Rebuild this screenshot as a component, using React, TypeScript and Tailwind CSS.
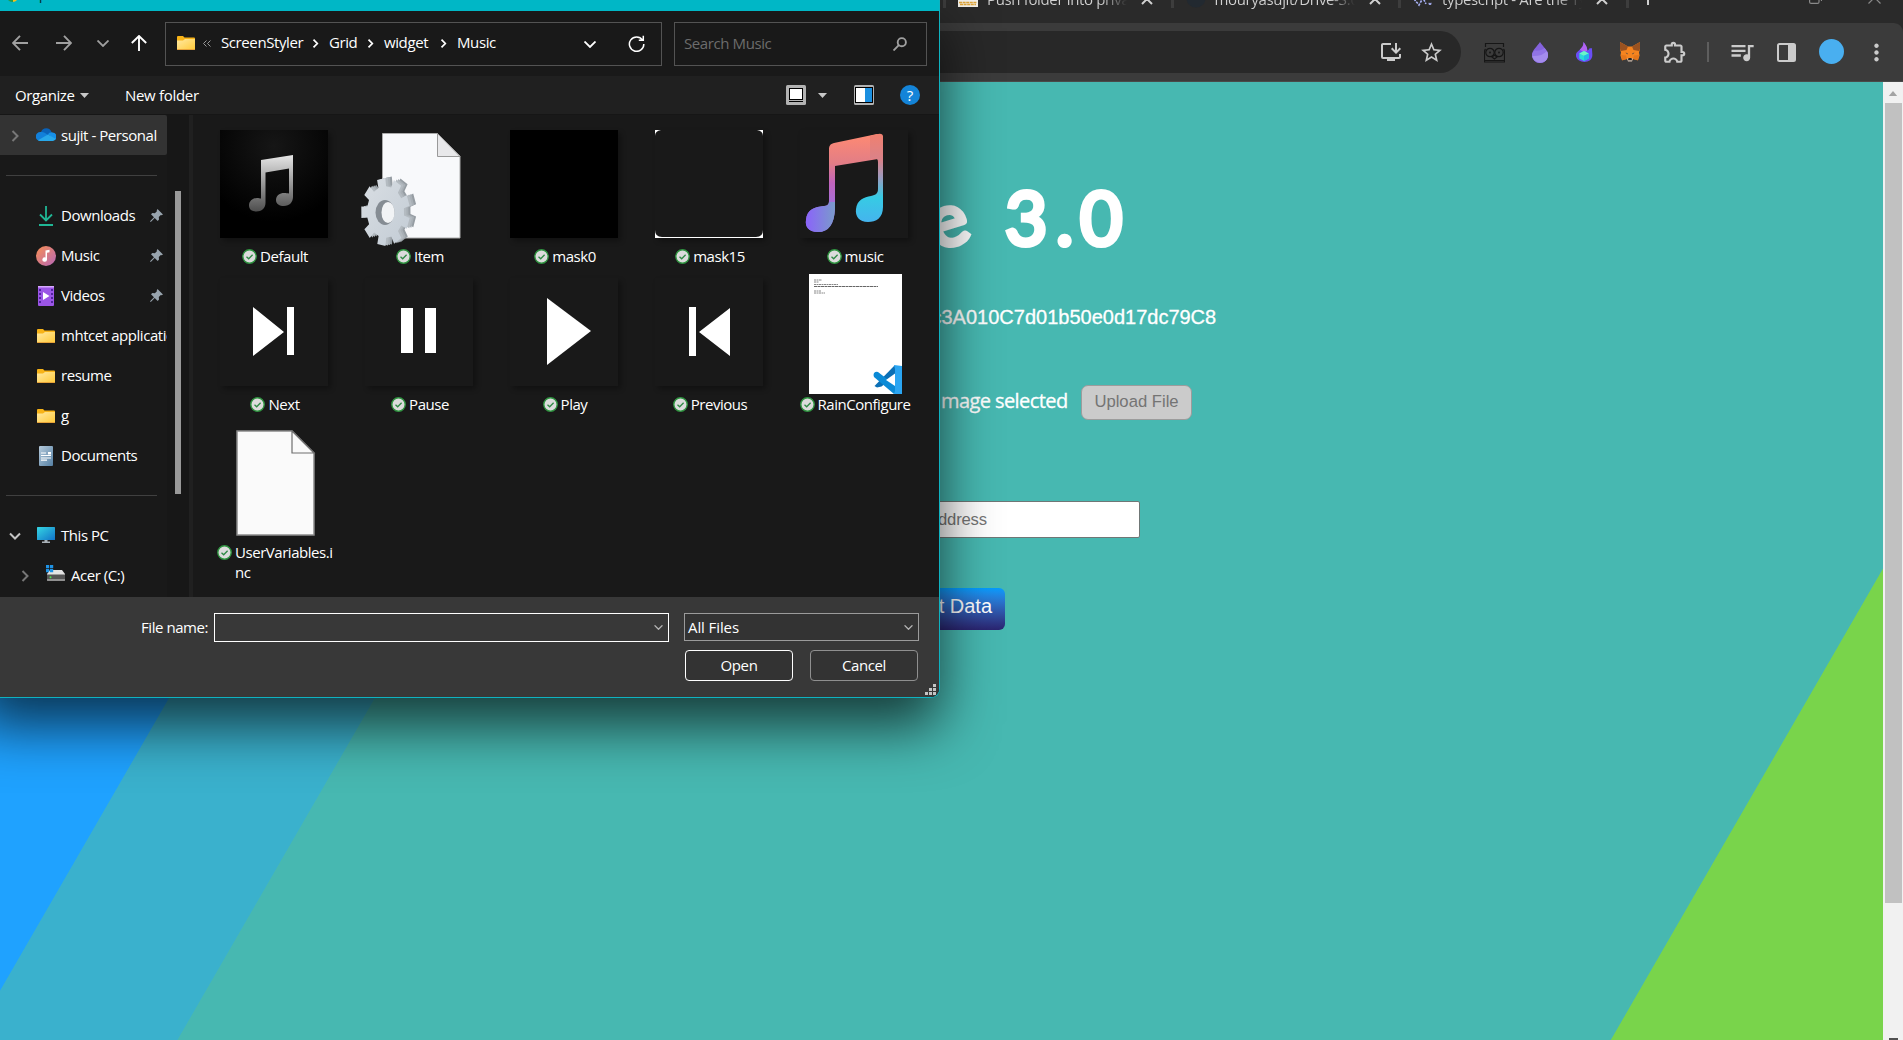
import type { ReactNode } from "react";
import {
  MdInstallDesktop,
  MdStarBorder,
  MdOutlineExtension,
  MdQueueMusic,
  MdMoreVert,
} from "react-icons/md";

const UI = "font-['Open_Sans','Noto_Sans',sans-serif]";
const ARIAL = "font-['Liberation_Sans',Arial,sans-serif]";

/* ---------- browser chrome ---------- */

function CloseMark() {
  return (
    <svg viewBox="0 0 12 12" className="size-3 shrink-0" fill="none" stroke="#d0d0d0" strokeWidth="2">
      <path d="M1 1l10 10M11 1L1 11" />
    </svg>
  );
}

function Tab({ icon, title }: { icon: ReactNode; title: string }) {
  return (
    <div className="flex h-[27px] w-[227.5px] shrink-0 items-center border-l-[3px] border-[#3d3d3d] pl-[12px]">
      <span className="flex size-5 shrink-0 items-center justify-center">{icon}</span>
      <span className="ml-[9px] w-[140px] translate-y-[5px] overflow-hidden bg-linear-to-r from-[#d2d2d2] from-82% to-transparent bg-clip-text text-[15px] tracking-[-0.35px] whitespace-nowrap text-transparent">
        {title}
      </span>
      <span className="ml-[14px] flex translate-y-[4px]">
        <CloseMark />
      </span>
    </div>
  );
}

function TabStrip() {
  return (
    <div className="h-[23px] overflow-hidden bg-[#2a2a2a] pl-[943px]">
      <div className="-mt-[19px] flex h-[27px] items-center">
        <Tab
          title="Push folder into private"
          icon={
            <svg viewBox="0 0 20 20" className="size-5 translate-y-[2px]">
              <rect width="20" height="20" fill="#f4f1ea" />
              <path d="M1 15.500h18M2 17.500h16" stroke="#e0a63a" strokeWidth="1.4" strokeDasharray="3 .6" />
            </svg>
          }
        />
        <Tab
          title="mouryasujit/Drive-3.0"
          icon={
            <svg viewBox="0 0 20 20" className="size-5 translate-y-[3px]">
              <circle cx="10" cy="10" r="9.500" fill="#222930" />
            </svg>
          }
        />
        <Tab
          title="typescript - Are the Types"
          icon={
            <svg viewBox="0 0 20 20" className="size-5 translate-y-[2px]" fill="none" stroke="#a9b2f5" strokeWidth="1.600" strokeDasharray="2.500 1">
              <path d="M1 12l5 6 4-7 3 6" />
              <circle cx="17" cy="16.500" r=".7" />
            </svg>
          }
        />
        <div className="flex h-[27px] w-[257px] shrink-0 items-center justify-between border-l-[3px] border-[#3d3d3d] pl-[12px]">
          <svg viewBox="0 0 14 14" className="size-[14px] translate-y-[3px]" fill="none" stroke="#d0d0d0" strokeWidth="2">
            <path d="M7 0v14M0 7h14" />
          </svg>
          <div className="flex translate-y-[3px] gap-[46px] pr-[2px]">
            <svg viewBox="0 0 13 13" className="size-[13px]" fill="none" stroke="#8a8a8a" strokeWidth="1.200">
              <rect x=".6" y="3" width="9.400" height="9.400" rx="1.500" />
              <path d="M3 .6h7.500a2 2 0 0 1 2 2V10" />
            </svg>
            <svg viewBox="0 0 13 13" className="size-[13px]" fill="none" stroke="#8a8a8a" strokeWidth="1.200">
              <path d="M.5.5l12 12M12.500.5l-12 12" />
            </svg>
          </div>
        </div>
      </div>
    </div>
  );
}

function Toolbar() {
  return (
    <div className="bg-[#2a2a2a]">
      <div className="flex h-[59px] items-center rounded-tr-[9px] border-b border-[#4a4a4a] bg-[#3b3b3b] text-[#cbcbcb]">
        <div className="flex h-[42px] w-[1461px] items-center rounded-r-full bg-[#282828] pl-[1379px]">
          <MdInstallDesktop className="size-6" />
          <MdStarBorder className="ml-[15.5px] size-[25px]" />
        </div>
        <svg viewBox="0 0 21 21" className="ml-[23px] size-[21px]" fill="none" stroke="#161616" strokeWidth="1.2">
          <path d="M1 1.500h19M1.500 1v4M19.500 1v4M1.500 7q-1 1-1 3v10h20V10q0-2-1-3M1 18.500h19" />
          <circle cx="6" cy="10.500" r="4.200" />
          <circle cx="15" cy="10.500" r="4.200" />
          <circle cx="6" cy="10.500" r=".4" />
          <circle cx="15" cy="10.500" r=".4" />
          <path d="M8 15l2.500 2 2.500-2-2.500-2z" />
        </svg>
        <svg viewBox="0 0 16 21" className="ml-[27px] h-[21px] w-4">
          <path d="M8 0c3 4.500 8 8.500 8 13a8 8 0 0 1-16 0C0 8.500 5 4.500 8 0z" fill="#8462dc" />
          <path d="M2.500 8.500c4 .5 8-.5 10-2.500 2 2.500 3.500 4.500 3.500 7a8 8 0 0 1-16 0c0-1.600 1-3 2.500-4.500z" fill="#9174e4" />
          <path d="M.3 14c6 .3 11-1 14.700-5 1.500 3 1.500 6-.6 9C11 22 2 21.500.3 14z" fill="#a48cec" />
        </svg>
        <svg viewBox="0 0 18 21" className="ml-[28px] h-[20px] w-[17px]">
          <path d="M8 0c2 3 4 5 4 9 1.200-.5 2-1.500 2.300-2.500H17c-.3 3 .6 5 .2 8.500-.7 4-4 6-8.200 6s-8-2-9-6c-.7-4 2-5 4-7C6.500 6 8 4 8 0z" fill="#6a4df6" />
          <path d="M8 0c2 3 4 5 4 9L9 11 4 8C6.500 6 8 4 8 0z" fill="#b263f0" />
          <path d="M8.500 9.500l5 2.500v5.500l-5 2.500-5-2.500V12z" fill="#2bd9d9" />
          <path d="M8.500 9.500l5 2.500-5 2.500-5-2.500z" fill="#6af5c8" />
          <path d="M8.500 14.500l5-2.500v5.500l-5 2.500z" fill="#22b8e8" />
        </svg>
        <svg viewBox="0 0 22 20" className="ml-[26px] h-5 w-[22px]">
          <path d="M1 0l8 4.500h4L21 0v7l-1 3.500.6 3-1.600 4.500-5-1-1.500 1.500h-3L8 17l-5 1-1.600-4.500.6-3L1 7z" fill="#f5841f" />
          <path d="M1 0l8 4.500L7.500 8 2 9 1 7zM21 0l-8 4.500L14.500 8l5.500 1 1-2z" fill="#9a5220" />
          <path d="M2 13l5 .5L8 17l-5 1.500zM20 13l-5 .5-1 3.500 5 1.500z" fill="#e4761b" />
          <path d="M8 16.500h6l-1 3H9z" fill="#d8c4b4" />
          <path d="M9.500 16h3l.5 2.200H9z" fill="#222" />
          <path d="M6.500 10.500l2 .8v1.200zM15.500 10.500l-2 .8v1.200z" fill="#2c3b4b" />
        </svg>
        <MdOutlineExtension className="ml-[21px] size-[26px]" />
        <div className="ml-[19px] h-5 w-[2px] bg-[#5e5e5e]" />
        <MdQueueMusic className="ml-[19px] size-[28px]" />
        <svg viewBox="0 0 19 19" className="ml-[21px] size-[19px]" fill="none">
          <rect x="1" y="1" width="17" height="17" rx="1.500" stroke="#cbcbcb" strokeWidth="2" />
          <path d="M11 1h7v17h-7z" fill="#cbcbcb" />
        </svg>
        <div className="-mt-px ml-[23px] size-[25px] rounded-full bg-[#49aff0]" />
        <MdMoreVert className="ml-[19px] size-[27px]" />
      </div>
    </div>
  );
}

/* ---------- web page ---------- */

function Page() {
  return (
    <div className="flex h-[958px]">
      <main className="w-[1883px] overflow-hidden bg-[linear-gradient(120deg,#1fa2ff_454px,#3ab1cd_454.8px,#3ab1cd_632.3px,#47b8b1_633px,#47b8b1_1873.6px,#79d44b_1874.4px)] pl-[941px] text-white">
        <h1 className="mt-[90px] flex h-[90px] items-center font-['Lato',sans-serif] text-[73px] leading-[90px] font-normal whitespace-pre [-webkit-text-stroke:5px_white] [stroke-linejoin:round]">
          <span className="-ml-[14px] inline-block w-[45px] -rotate-[17deg]">e</span>
          <span className="ml-[33px] w-[51px]">3</span>
          <span className="w-[24px]">.</span>
          <span className="w-[50px]">0</span>
        </h1>
        <p className={`mt-[41px] -ml-[9.5px] h-[28px] text-[20px] leading-[28px] ${ARIAL} [-webkit-text-stroke:0.3px_white]`}>
          c3A010C7d01b50e0d17dc79C8
        </p>
        <div className="mt-[54px] flex h-[35px]">
          <span className={`w-[140px] text-[20px] leading-[31px] font-medium tracking-[-0.58px] whitespace-nowrap ${UI} [-webkit-text-stroke:0.3px_white]`}>mage selected</span>
          <button className={`h-[35px] w-[111px] rounded-[7px] border border-[#9c9c9c] bg-[#cbcbcb] pb-[3px] text-[16.67px] text-[#747474] ${ARIAL}`}>
            Upload File
          </button>
        </div>
        <div className={`mt-[81px] -ml-[10px] flex h-[37px] w-[209px] items-center rounded-r-[2px] border border-[#6f7776] bg-white pl-[6px] text-[16.67px] tracking-[-0.2px] text-[#757575] ${ARIAL}`}>
          ddress
        </div>
        <button className={`mt-[50px] -ml-[10px] flex h-[42px] w-[74px] justify-end rounded-[6px] bg-linear-to-b from-[#009dff] to-[#2a2470] pt-[3px] pr-[13px] text-[20px] whitespace-nowrap ${ARIAL}`}>
          t Data
        </button>
      </main>
      <div className="flex w-5 flex-col items-center bg-[#f1f1f1]">
        <svg viewBox="0 0 10 6" className="mt-[9px] h-[5px] w-[10px]">
          <path d="M0 6l5-6 5 6z" fill="#a3a3a3" />
        </svg>
        <div className="mt-[7px] h-[800px] w-[17px] bg-[#c1c1c1]" />
        <div className="mt-[135px] h-[2px] w-[9px] bg-[#505050]" />
      </div>
    </div>
  );
}

/* ---------- dialog icons ---------- */

function Folder() {
  return (
    <svg viewBox="0 0 18 14" className="h-[14px] w-[18px] shrink-0">
      <defs>
        <linearGradient id="fold" x1="0" y1="0" x2="1" y2="1">
          <stop offset="0" stopColor="#ffe9a2" />
          <stop offset="1" stopColor="#ffc937" />
        </linearGradient>
      </defs>
      <path d="M0 1a1 1 0 0 1 1-1h5l1.500 1.500H17a1 1 0 0 1 1 1V13H0z" fill="#f7b318" />
      <path d="M0 4.500h6L8 3h10v10a1 1 0 0 1-1 1H1a1 1 0 0 1-1-1z" fill="url(#fold)" />
      <path d="M0 13h18a1 1 0 0 1-1 1H1a1 1 0 0 1-1-1z" fill="#e8a33a" />
    </svg>
  );
}

function Pin() {
  return (
    <svg viewBox="0 0 13 13" className="size-[13px] shrink-0">
      <path d="M7.500 0L13 5.500l-1.500.8-.7-.2-2 2 .2 2.500-1.300 1.400-3-3L.8 13 0 12.200 4 8.300l-3-3L2.400 4l2.500.2 2-2-.2-.7z" fill="#98a4ae" />
    </svg>
  );
}

function Chevron({ open = false }: { open?: boolean }) {
  return (
    <svg viewBox="0 0 12 12" className="size-3 shrink-0" fill="none" stroke={open ? "#c4c4c4" : "#777"} strokeWidth="2">
      <path d={open ? "M1 3.500l5 5 5-5" : "M3.500 1l5 5-5 5"} />
    </svg>
  );
}

function ThinChevron({ className, color = "#fff" }: { className: string; color?: string }) {
  return (
    <svg viewBox="0 0 12 7" className={className} fill="none" stroke={color} strokeWidth="1.8">
      <path d="M.5.5L6 6 11.500.5" />
    </svg>
  );
}

function NavArrow({ d, color }: { d: string; color: string }) {
  return (
    <svg viewBox="0 0 16 16" className="size-4 shrink-0" fill="none" stroke={color} strokeWidth="1.9">
      <path d={d} />
    </svg>
  );
}

function SyncedBadge() {
  return (
    <svg viewBox="0 0 15 15" className="mt-[3px] size-[15px] shrink-0">
      <circle cx="7.500" cy="7.500" r="6.700" fill="#dcdcdc" stroke="#2f9440" strokeWidth="1.400" />
      <path d="M4.500 7.700l2.200 2.100 3.900-4" fill="none" stroke="#2f8a45" strokeWidth="1.300" />
    </svg>
  );
}

const sideIcons: Record<string, ReactNode> = {
  cloud: (
    <svg viewBox="0 0 20 13" className="-mt-[2px] h-[13px] w-5">
      <path d="M5 4a5.500 5.500 0 0 1 10.500 0L10 9 2 7z" fill="#0a62b8" />
      <path d="M4.500 4C7 3.500 9 4.500 12 7l-8 6A4.500 4.500 0 0 1 4.500 4z" fill="#1280da" />
      <path d="M12 6.500c1-2 3-2.500 4.500-2A4.200 4.200 0 0 1 19 12z" fill="#1790e8" />
      <path d="M2 12.200L12 6.500l7.500 4.200A3 3 0 0 1 17 13H4a4 4 0 0 1-2-.8z" fill="#28a8ea" />
    </svg>
  ),
  download: (
    <svg viewBox="0 0 14 20" className="h-5 w-[14px]" fill="none" stroke="#20b795" strokeWidth="1.800">
      <path d="M7 0v14M1 8.500l6 6 6-6M0 19h14" />
    </svg>
  ),
  music: (
    <svg viewBox="0 0 20 20" className="size-5">
      <defs>
        <linearGradient id="mus" x1="0" y1="0" x2="1" y2="1">
          <stop offset="0" stopColor="#f98f52" />
          <stop offset="1" stopColor="#b567b8" />
        </linearGradient>
      </defs>
      <circle cx="10" cy="10" r="10" fill="url(#mus)" />
      <path d="M9.500 4.500l4-.8v2.600l-2.500.5v6.700a2.300 2.300 0 1 1-1.500-2.100z" fill="#fff" />
    </svg>
  ),
  video: (
    <svg viewBox="0 0 16 20" className="h-5 w-4">
      <rect width="16" height="20" rx="1" fill="#9b55e6" />
      <rect width="16" height="1.500" fill="#d7a8ff" />
      <path d="M5 6v8l6.500-4z" fill="#fff" />
      <path d="M2 3v16M14 3v16" stroke="#4b1f96" strokeWidth="1.800" strokeDasharray="2 2" />
    </svg>
  ),
  folder: <Folder />,
  docs: (
    <svg viewBox="0 0 14 20" className="h-5 w-[14px]">
      <defs>
        <linearGradient id="doc" x1="0" y1="0" x2="1" y2="1">
          <stop offset="0" stopColor="#b5cadb" />
          <stop offset="1" stopColor="#5580a4" />
        </linearGradient>
      </defs>
      <rect width="14" height="20" rx="1" fill="url(#doc)" />
      <path d="M2 7h5M2 9.500h10M2 12h10M2 14.200h6" stroke="#fff" strokeWidth="1.200" />
      <path d="M9 6h3v2.500H9z" fill="#fff" />
    </svg>
  ),
  pc: (
    <svg viewBox="0 0 18 16" className="-mt-px h-4 w-[18px]">
      <defs>
        <linearGradient id="pc" x1="0" y1="0" x2="1" y2="1">
          <stop offset="0" stopColor="#35d6e3" />
          <stop offset="1" stopColor="#1173c8" />
        </linearGradient>
      </defs>
      <rect width="18" height="13" rx=".6" fill="url(#pc)" />
      <path d="M7.500 13h3v1.500H13V16H5v-1.500h2.500z" fill="#a9b1b8" />
    </svg>
  ),
  drive: (
    <svg viewBox="0 0 19 16" className="-mt-[5px] h-4 w-[19px]">
      <path d="M4 5h12l3 4v1H1V9z" fill="#e4e4e4" />
      <path d="M1 9.500h18V15a1 1 0 0 1-1 1H2a1 1 0 0 1-1-1z" fill="#555" />
      <path d="M1 14.500h18v1H1z" fill="#ccc" />
      <circle cx="4.500" cy="12.300" r="1" fill="#4de34d" />
      <path d="M0 0h3.200v3.200H0zM4 0h3.200v3.200H4zM0 4h3.200v3.200H0zM4 4h3.200v3.200H4z" fill="#1e93e6" />
    </svg>
  ),
};

/* ---------- dialog parts ---------- */

type SideRow = { label: string; icon: string; pin?: boolean; chevron?: "open" | "closed"; selected?: boolean; nested?: boolean } | null;

const sideRows: SideRow[] = [
  { label: "sujit - Personal", icon: "cloud", chevron: "closed", selected: true },
  null,
  { label: "Downloads", icon: "download", pin: true },
  { label: "Music", icon: "music", pin: true },
  { label: "Videos", icon: "video", pin: true },
  { label: "mhtcet application", icon: "folder" },
  { label: "resume", icon: "folder" },
  { label: "g", icon: "folder" },
  { label: "Documents", icon: "docs" },
  null,
  { label: "This PC", icon: "pc", chevron: "open" },
  { label: "Acer (C:)", icon: "drive", chevron: "closed", nested: true },
];

function Sidebar() {
  return (
    <div className="flex h-[482px] w-[193px] shrink-0 overflow-hidden">
      <div className="w-[167px] shrink-0">
        {sideRows.map((row, i) =>
          row === null ? (
            <div key={i} className="flex h-10 items-center pl-[6px]">
              <div className="h-px w-[151px] bg-[#404040]" />
            </div>
          ) : (
            <div
              key={i}
              className={`flex h-10 items-center overflow-hidden pt-px ${row.nested ? "pl-[19px]" : "pl-[9px]"} ${row.selected ? "rounded-r-[2px] bg-[#333]" : ""}`}
            >
              <span className="w-3 shrink-0">{row.chevron && <Chevron open={row.chevron === "open"} />}</span>
              <span className={`flex w-5 shrink-0 justify-center ${row.nested ? "ml-[14px]" : "ml-[15px]"}`}>{sideIcons[row.icon]}</span>
              <span className={`${row.nested ? "ml-[6px]" : "ml-[5px]"} w-[89px] shrink-0 text-[15px] tracking-[-0.45px] whitespace-nowrap`}>
                {row.label}
              </span>
              {row.pin && <Pin />}
            </div>
          ),
        )}
      </div>
      <div className="w-[22px] shrink-0 bg-[#171717] pt-[76px] pl-[8px]">
        <div className="h-[303px] w-[6px] bg-[#999]" />
      </div>
      <div className="h-full w-1 border-r-2 border-l-2 border-[#202020] bg-[#262626]" />
    </div>
  );
}

function Thumb({ children }: { children?: ReactNode }) {
  return (
    <div className="size-[108px] shadow-[3px_3px_5px_rgba(0,0,0,0.3)]">
      <svg viewBox="0 0 108 108" className="size-[108px]">
        {children}
      </svg>
    </div>
  );
}

/* Outline of a cog seen slightly from the side: nine flat-topped teeth round an ellipse. */
function cog(cx: number, cy: number, rx: number, ry: number) {
  const teeth = 9;
  const inner = 0.76;
  const pts: string[] = [];
  for (let i = 0; i < teeth; i++) {
    const base = (i / teeth) * Math.PI * 2 - 1.75;
    const steps: [number, number][] = [
      [-0.21, inner],
      [-0.17, 1],
      [0.17, 1],
      [0.21, inner],
    ];
    for (const [da, r] of steps) {
      pts.push(`${(cx + Math.cos(base + da) * rx * r).toFixed(1)},${(cy + Math.sin(base + da) * ry * r).toFixed(1)}`);
    }
  }
  return pts.join(" ");
}

type FileItem = { name: string; art: ReactNode };

const files: FileItem[] = [
  {
    name: "Default",
    art: (
      <Thumb>
        <defs>
          <radialGradient id="dk" cx=".5" cy=".15" r=".7">
            <stop offset="0" stopColor="#161616" />
            <stop offset="1" stopColor="#000" />
          </radialGradient>
          <linearGradient id="nt" x1="0" y1="25" x2="0" y2="82" gradientUnits="userSpaceOnUse">
            <stop offset="0" stopColor="#e6e6e6" />
            <stop offset="1" stopColor="#4c4c4c" />
          </linearGradient>
        </defs>
        <rect width="108" height="108" fill="url(#dk)" />
        <path d="M41 30l32-5v42c0 5-3.500 9-9 9-4.500 0-8-2-8-6 0-4.500 4-7 8-7 2 0 3.500.3 5 .5V38.500l-23.500 4V73c0 5-4 8.500-9 8.500-4.500 0-7.500-2-7.500-6 0-4.500 4-7.500 8-7.500 1.500 0 3 .3 4 .6z" fill="url(#nt)" />
      </Thumb>
    ),
  },
  {
    name: "Item",
    art: (
      <svg viewBox="0 0 120 120" className="size-[120px] overflow-visible">
        <defs>
          <linearGradient id="gear" x1="0" y1="0" x2="1" y2="1">
            <stop offset="0" stopColor="#d9dee3" />
            <stop offset="1" stopColor="#c3ccd5" />
          </linearGradient>
        </defs>
        <path d="M23.500 7.500h55l22.500 22.500v82H23.500z" fill="#f8f9fb" stroke="#aaa" />
        <path d="M78.500 7.500L101 30.500H78.500z" fill="#e8e8ea" stroke="#999" />
        <polygon points={cog(33, 84.5, 24.5, 34)} fill="#969da3" />
        <polygon points={cog(31, 85, 24.5, 34)} fill="#a9b0b6" />
        <polygon points={cog(29, 85.5, 24.5, 34)} fill="#b4bbc1" />
        <polygon points={cog(26.5, 86, 24.5, 34)} fill="url(#gear)" />
        <ellipse cx="26" cy="86.500" rx="9.500" ry="12.500" fill="#858c93" />
        <ellipse cx="29" cy="86.500" rx="6.500" ry="10.500" fill="#f1f3f5" />
      </svg>
    ),
  },
  { name: "mask0", art: <Thumb><rect width="108" height="108" fill="#000" /></Thumb> },
  {
    name: "mask15",
    art: (
      <Thumb>
        <path fillRule="evenodd" d="M0 0h108v108H0zM6 0q-6 1-6 6v94q0 7 7 7h94q7 0 7-7V6q0-5-6-6z" fill="#fff" />
      </Thumb>
    ),
  },
  {
    name: "music",
    art: (
      <Thumb>
        <defs>
          <linearGradient id="mA" x1="0" y1="0" x2="0" y2="1">
            <stop offset="0" stopColor="#ff8a72" />
            <stop offset=".3" stopColor="#e27d86" />
            <stop offset=".5" stopColor="#c164bd" />
            <stop offset=".75" stopColor="#a072dd" />
            <stop offset="1" stopColor="#8a6cf0" />
          </linearGradient>
          <linearGradient id="mB" x1="0" y1="0" x2="0" y2="1">
            <stop offset="0" stopColor="#f0806f" />
            <stop offset=".3" stopColor="#d9828a" />
            <stop offset=".5" stopColor="#9a9cc0" />
            <stop offset=".72" stopColor="#36cbe4" />
            <stop offset="1" stopColor="#45b4ee" />
          </linearGradient>
          <linearGradient id="mC" x1="0" y1="0" x2="1" y2="0">
            <stop offset="0" stopColor="#8b63fa" />
            <stop offset="1" stopColor="#7a9bcb" />
          </linearGradient>
        </defs>
        <path d="M29 20c0-4 1-6 5-7l43-9 6 2-5 23-43 7v43q-1 23-17 23C8 102 5 96 6 90c1-11 9-13 18-14 4-.5 5-2 5-6z" fill="url(#mA)" />
        <path d="M35 78q-1 24-17 24C8 102 5 96 6 90c1-11 9-13 18-14 3 0 5-1 5-4h6z" fill="url(#mC)" />
        <path d="M70 6l8-2q5-1 5 3v70c0 11-7 15-15 15-9 0-13-6-12-13 1-9 8-12 15-13 5-1 7-3 7-7V32q0-4-4-4l-4 1z" fill="url(#mB)" />
      </Thumb>
    ),
  },
  { name: "Next", art: <Thumb><path d="M33 29l31 25-31 24zM67 29h7v48h-7z" fill="#fff" /></Thumb> },
  { name: "Pause", art: <Thumb><path d="M36 30h12v45H36zM60 30h11v45H60z" fill="#fff" /></Thumb> },
  { name: "Play", art: <Thumb><path d="M37 20l44 33-44 34z" fill="#fff" /></Thumb> },
  { name: "Previous", art: <Thumb><path d="M34 29h7v49h-7zM75 30v48L44 54z" fill="#fff" /></Thumb> },
  {
    name: "RainConfigure",
    art: (
      <svg viewBox="0 0 93 120" className="ml-[3px] h-[120px] w-[93px]">
        <rect width="93" height="120" fill="#fff" />
        <path d="M5 6h8M5 8h5M5 10.500h24M5 17h7M5 19h11" stroke="#888" strokeWidth="1" strokeDasharray="2 .5" />
        <path d="M5 12.500h64" stroke="#666" strokeWidth="1" strokeDasharray="3 .5" />
        <path d="M65.500 112l20-20.500 5 7-18 14-4.500 1z" fill="#0b6fb5" />
        <path d="M65 99q2-2 4-1l22 17-6 5-20-17q-1-2 0-4z" fill="#0b8ad6" />
        <path d="M85 91l8 1v28h-8l1-3V95z" fill="#2aa5f2" />
        <path d="M86 99.500v12.500l-9-6z" fill="#fff" />
      </svg>
    ),
  },
  {
    name: "UserVariables.inc",
    art: (
      <svg viewBox="0 0 80 106" className="mt-[2px] ml-[3px] h-[106px] w-[80px]">
        <path d="M1 1h55l22 22v82H1z" fill="#fafafa" stroke="#8b8b8b" strokeWidth="1.500" />
        <path d="M56 1v22h22z" fill="#fafafa" stroke="#6f6f6f" strokeWidth="1.200" />
      </svg>
    ),
  },
];

function FileGrid() {
  return (
    <div className="grid flex-1 auto-rows-[148px] grid-cols-[repeat(5,145px)] content-start overflow-hidden pt-[11px] pl-[8.5px]">
      {files.map((f) => (
        <div key={f.name} className="flex flex-col items-center">
          <div className="flex h-[120px] shrink-0 items-center justify-center [&>div]:-mt-[4px]">{f.art}</div>
          <div className="flex shrink-0 gap-[3px] pl-[2px] text-[15px] leading-5 tracking-[-0.46px]">
            <SyncedBadge />
            <span className="max-w-[98px] break-all">{f.name}</span>
          </div>
        </div>
      ))}
    </div>
  );
}

function Crumb({ label, width }: { label: string; width: string }) {
  return <span className={`${width} whitespace-nowrap`}>{label}</span>;
}

function CrumbArrow() {
  return (
    <svg viewBox="0 0 6 9" className="mt-[2px] h-[9px] w-[27px] shrink-0" fill="none" stroke="#fff" strokeWidth="1.700">
      <path d="M1 .7l3.800 3.800L1 8.300" />
    </svg>
  );
}

function AddressRow() {
  return (
    <div className="flex h-[65px] items-center bg-[#191919] pl-[12px]">
      <div className="flex items-center pb-px">
        <NavArrow d="M8 .8L1 8l7 7.200M1 8h15" color="#a0a0a0" />
        <span className="ml-7 flex">
          <NavArrow d="M8 .8L15 8l-7 7.200M15 8H0" color="#a0a0a0" />
        </span>
        <ThinChevron className="ml-[25px] h-[7px] w-[12px]" color="#a0a0a0" />
        <span className="ml-[22px] flex">
          <NavArrow d="M.8 8L8 1l7.200 7M8 1v15" color="#fff" />
        </span>
      </div>
      <div className="ml-[18px] flex h-[44px] w-[497px] items-center border border-[#535353] pl-[11px] text-[15px] tracking-[-0.4px]">
        <span className="flex pb-[2px]">
          <Folder />
        </span>
        <svg viewBox="0 0 8 7" className="-mt-px ml-[8px] h-[7px] w-2" fill="none" stroke="#9a9a9a" strokeWidth="1">
          <path d="M3.500.5l-3 3 3 3M7.500.5l-3 3 3 3" />
        </svg>
        <span className="ml-[10px] flex items-center pb-[3px]">
          <Crumb label="ScreenStyler" width="w-[81px]" />
          <CrumbArrow />
          <Crumb label="Grid" width="w-[28px]" />
          <CrumbArrow />
          <Crumb label="widget" width="w-[46px]" />
          <CrumbArrow />
          <Crumb label="Music" width="w-[38px]" />
        </span>
        <ThinChevron className="mt-[2px] ml-[89px] h-[7px] w-[12px]" />
        <svg viewBox="0 0 17 17" className="ml-[32px] size-[17px]" fill="none" stroke="#fff" strokeWidth="1.500">
          <path d="M14.500 5A7.200 7.200 0 1 0 15.800 9M15.300.8V5.200H10.800" />
        </svg>
      </div>
      <div className="ml-3 flex h-[44px] w-[253px] items-center justify-between border border-[#535353] pr-[19px] pl-[9px] text-[15px] text-[#6c6c6c]">
        <span className="tracking-[-0.4px]">Search Music</span>
        <svg viewBox="0 0 14 14" className="size-[14px]" fill="none" stroke="#a0a0a0" strokeWidth="1.900">
          <circle cx="8.800" cy="5.200" r="4.100" />
          <path d="M5.800 8.200L.5 13.500" />
        </svg>
      </div>
    </div>
  );
}

function CommandBar() {
  return (
    <div className="flex h-[39px] items-center border-b border-[#161616] bg-[#202020] pl-[15px] text-[15px]">
      <span className="w-[60px] tracking-[-0.4px] whitespace-nowrap">Organize</span>
      <svg viewBox="0 0 9 5" className="ml-[5px] h-[5px] w-[9px]">
        <path d="M0 0h9L4.500 5z" fill="#c8c8c8" />
      </svg>
      <span className="ml-[36px] w-[75px] tracking-[-0.3px] whitespace-nowrap">New folder</span>
      <svg viewBox="0 0 20 20" className="ml-[586px] size-5">
        <rect width="20" height="20" rx="1.500" fill="#b2b2b2" />
        <rect x="3.500" y="3.500" width="13" height="11" fill="#fff" stroke="#000" />
        <path d="M3 16.500h14" stroke="#000" />
      </svg>
      <svg viewBox="0 0 9 5" className="ml-[12px] h-[5px] w-[9px]">
        <path d="M0 0h9L4.500 5z" fill="#c8c8c8" />
      </svg>
      <svg viewBox="0 0 20 20" className="ml-[27px] size-5">
        <rect width="20" height="20" rx="1.500" fill="#b2b2b2" />
        <rect x="1.500" y="2.500" width="17" height="15" fill="#fff" stroke="#000" />
        <path d="M11 3h7v14h-7z" fill="#1b8fe0" />
      </svg>
      <span className="ml-[26px] flex size-5 items-center justify-center rounded-full bg-[#1484d8] text-[15px] leading-5">?</span>
    </div>
  );
}

function Footer() {
  return (
    <div className="flex h-[100px] flex-col bg-[#383838] pt-4 text-[15px]">
      <div className="flex h-[29px] items-start">
        <span className="ml-[141px] w-[73px] pt-[4px] leading-5 tracking-[-0.45px]">File name:</span>
        <div className="flex h-[29px] w-[455px] items-center justify-end border border-white pr-[5px]">
          <ThinChevron className="h-[5px] w-[9px]" color="#b5b5b5" />
        </div>
        <div className="ml-[15px] flex h-[28px] w-[235px] items-center justify-between border border-[#9b9b9b] bg-[#333] pr-[5px] pl-[3px] tracking-[-0.1px]">
          All Files
          <ThinChevron className="h-[5px] w-[9px]" color="#b5b5b5" />
        </div>
      </div>
      <div className="mt-2 flex pl-[685px] tracking-[-0.4px]">
        <button className="h-[31px] w-[108px] rounded-[4px] border border-white bg-[#333] pb-px">Open</button>
        <button className="ml-[17px] h-[31px] w-[108px] rounded-[4px] border border-[#8f8f8f] bg-[#333] pb-px">Cancel</button>
        <svg viewBox="0 0 11 11" className="mt-[34px] ml-[7px] size-[11px]" fill="#c4c4c4">
          <path d="M8 0h3v3H8zM8 4h3v3H8zM4 4h3v3H4zM0 8h3v3H0zM4 8h3v3H4zM8 8h3v3H8z" />
        </svg>
      </div>
    </div>
  );
}

function OpenDialog() {
  return (
    <section
      className={`absolute top-0 -left-[24px] h-[698px] w-[964px] overflow-hidden rounded-br-[9px] border-r border-b border-[#0fb2c0] bg-[#191919] pl-[24px] text-white shadow-[0_28px_56px_rgba(0,0,0,0.68)] ${UI}`}
    >
      <div className="flex h-[11px] items-end overflow-hidden bg-[#00b7c6]">
        <div className="mb-[9px] ml-[6px] flex h-5 items-end">
          <span className="size-[13px] rounded-full bg-[conic-gradient(#e33b2e_0_33%,#f9c016_33%_50%,#1e9a4b_50%_100%)]" />
          <span className="ml-[8px] text-[15px] leading-[17px] text-[#062f33]">Open</span>
        </div>
      </div>
      <AddressRow />
      <CommandBar />
      <div className="flex h-[482px]">
        <Sidebar />
        <FileGrid />
      </div>
      <Footer />
    </section>
  );
}

export default function App() {
  return (
    <div className={`relative h-[1040px] w-[1903px] overflow-hidden ${UI}`}>
      <TabStrip />
      <Toolbar />
      <Page />
      <OpenDialog />
    </div>
  );
}
